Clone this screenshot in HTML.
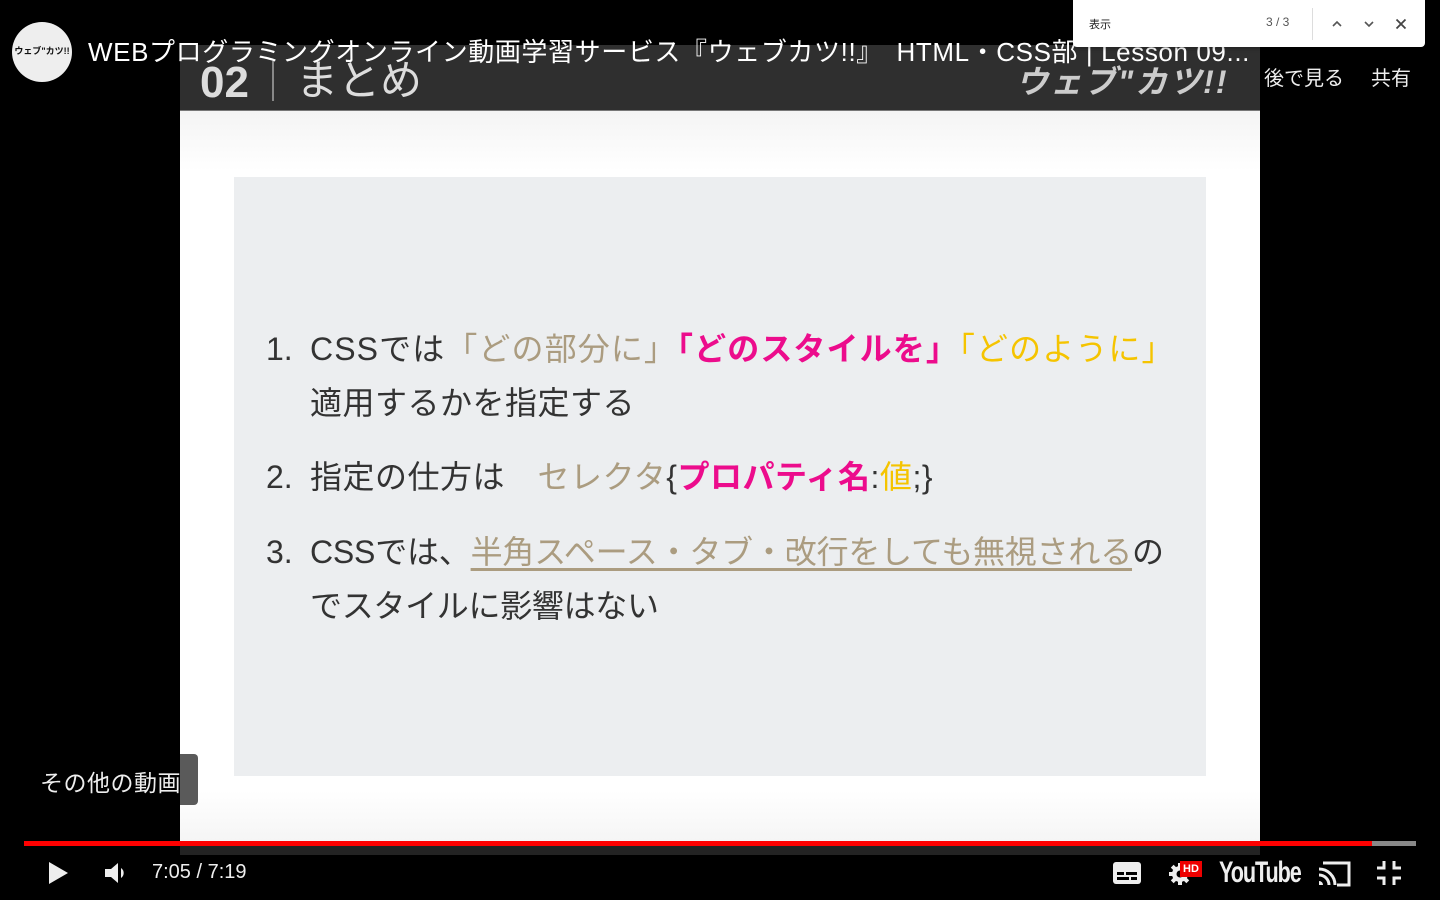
<!DOCTYPE html>
<html><head><meta charset="utf-8"><style>
*{margin:0;padding:0;box-sizing:border-box}
body{width:1440px;height:900px;background:#000;overflow:hidden;position:relative;font-family:"Liberation Sans","Noto Sans CJK JP",sans-serif;color:#fff}
.abs{position:absolute}
.video{left:180px;top:45px;width:1080px;height:810px;background:#fff}
.band{left:0;top:0;width:1080px;height:66px;background:#2f2f2f;border-bottom:1px solid #777}
.slide{left:0;top:66px;width:1080px;height:730px;background:linear-gradient(#f4f4f4,#fff 60px,#fff 680px,#f3f3f3 740px,#b9b9b9 796px)}
.panel{left:54px;top:132px;width:972px;height:599px;background:#eceef0}
.t{font-size:32px;color:#333;white-space:nowrap;letter-spacing:0.5px}
.n{display:inline-block;width:44px;letter-spacing:0}
.tan{color:#ab9c80}.mag{color:#ec0c8c}.yel{color:#f5c400}
</style></head><body>
<div class="abs video">
  <div class="abs band">
    <div class="abs" style="left:20px;top:12px;font-size:44px;font-weight:bold;color:#ddd;line-height:52px">02</div>
    <div class="abs" style="left:92px;top:16px;width:2px;height:40px;background:#888"></div>
    <div class="abs" style="left:116px;top:10px;font-size:42px;color:#ddd;line-height:52px">まとめ</div>
    <div class="abs" style="left:836px;top:12px;font-size:32px;font-weight:bold;color:#ccc;font-style:italic;letter-spacing:2px">ウェブ"カツ!!</div>
  </div>
  <div class="abs slide"></div>
  <div class="abs panel"></div>
  <div class="abs t" style="left:86px;top:279px;letter-spacing:1.1px"><span class="n">1.</span>CSSでは<span class="tan">「どの部分に」</span><span class="mag" style="font-weight:bold">「どのスタイルを」</span><span class="yel">「どのように」</span></div>
  <div class="abs t" style="left:130px;top:333px">適用するかを指定する</div>
  <div class="abs t" style="left:86px;top:407px"><span class="n">2.</span>指定の仕方は　<span class="tan">セレクタ</span>{<span class="mag" style="font-weight:bold">プロパティ名</span>:<span class="yel">値</span>;}</div>
  <div class="abs t" style="left:86px;top:482px;letter-spacing:-0.2px"><span class="n">3.</span>CSSでは、<span class="tan" style="text-decoration:underline;text-decoration-thickness:3px;text-underline-offset:5px">半角スペース・タブ・改行をしても無視される</span>の</div>
  <div class="abs t" style="left:130px;top:536px;letter-spacing:-0.3px">でスタイルに影響はない</div>
  <div class="abs" style="left:0;top:800px;width:1080px;height:10px;background:#232323"></div>
</div>
<div class="abs" style="left:12px;top:22px;width:60px;height:60px;border-radius:50%;background:#eee;color:#111;font-size:9px;font-weight:bold;text-align:center;line-height:58px">ウェブ"カツ!!</div>
<div class="abs" style="left:88px;top:36px;font-size:26px;white-space:nowrap;line-height:32px;letter-spacing:0.6px">WEBプログラミングオンライン動画学習サービス『ウェブカツ!!』　HTML・CSS部 | Lesson 09...</div>
<div class="abs" style="left:1264px;top:62px;font-size:20px;color:#eee">後で見る</div>
<div class="abs" style="left:1371px;top:62px;font-size:20px;color:#eee">共有</div>
<div class="abs" style="left:1073px;top:0;width:352px;height:47px;background:#fff;border-radius:0 0 4px 4px;box-shadow:0 1px 4px rgba(0,0,0,.3);color:#222">
  <div class="abs" style="left:16px;top:16px;font-size:11px">表示</div>
  <div class="abs" style="left:193px;top:15px;font-size:12px;color:#555">3 / 3</div>
  <div class="abs" style="left:239px;top:8px;width:1px;height:32px;background:#ddd"></div>
  <svg class="abs" style="left:256px;top:16px" width="16" height="16" viewBox="0 0 16 16"><path d="M4 10l4-4 4 4" stroke="#555" stroke-width="1.6" fill="none"/></svg>
  <svg class="abs" style="left:288px;top:16px" width="16" height="16" viewBox="0 0 16 16"><path d="M4 6l4 4 4-4" stroke="#555" stroke-width="1.6" fill="none"/></svg>
  <svg class="abs" style="left:320px;top:16px" width="16" height="16" viewBox="0 0 16 16"><path d="M3.5 3.5l9 9M12.5 3.5l-9 9" stroke="#444" stroke-width="1.8"/></svg>
</div>
<div class="abs" style="left:180px;top:754px;width:18px;height:51px;background:#5a5a5a;border-radius:0 4px 4px 0"></div>
<div class="abs" style="left:40px;top:764px;font-size:23px;color:#eee;letter-spacing:0.5px">その他の動画</div>
<div class="abs" style="left:24px;top:841px;width:1392px;height:5px;background:#888"></div>
<div class="abs" style="left:24px;top:841px;width:1348px;height:5px;background:#f00"></div>
<svg class="abs" style="left:46px;top:860px" width="24" height="26" viewBox="0 0 24 26"><path d="M3 2v22l19-11z" fill="#eee"/></svg>
<svg class="abs" style="left:104px;top:860px" width="24" height="26" viewBox="0 0 24 26"><path d="M1 9h6l7-6v20l-7-6H1z" fill="#eee"/><path d="M17 8a6 6 0 0 1 0 10z" fill="#eee"/></svg>
<div class="abs" style="left:152px;top:861px;font-size:20px;color:#eee">7:05 / 7:19</div>
<svg class="abs" style="left:1113px;top:861px" width="28" height="24" viewBox="0 0 28 24"><rect x="0" y="1" width="28" height="22" rx="3" fill="#eee"/><rect x="4" y="11" width="7" height="3" fill="#000"/><rect x="13" y="11" width="11" height="3" fill="#000"/><rect x="4" y="16" width="12" height="3" fill="#000"/><rect x="18" y="16" width="6" height="3" fill="#000"/></svg>
<svg class="abs" style="left:1168px;top:860px" width="26" height="26" viewBox="0 0 26 26"><g fill="#eee"><circle cx="12" cy="14" r="8"/><rect x="10" y="3" width="4" height="22"/><rect x="1" y="12" width="22" height="4"/><rect x="10" y="3" width="4" height="22" transform="rotate(45 12 14)"/><rect x="10" y="3" width="4" height="22" transform="rotate(-45 12 14)"/></g><circle cx="12" cy="14" r="3.5" fill="#000"/></svg>
<div class="abs" style="left:1180px;top:861px;width:22px;height:16px;background:#e00;font-size:11px;font-weight:bold;line-height:16px;text-align:center">HD</div>
<div class="abs" style="left:1219px;top:856px;font-size:30px;font-weight:bold;color:#eee;letter-spacing:-1.5px;transform:scaleX(0.72);transform-origin:left">YouTube</div>
<svg class="abs" style="left:1317px;top:859px" width="36" height="30" viewBox="0 0 36 30"><path d="M6 4h26v22H20" stroke="#eee" stroke-width="3" fill="none"/><path d="M2 10a16 16 0 0 1 16 16M2 16a10 10 0 0 1 10 10" stroke="#eee" stroke-width="3" fill="none"/><path d="M2 22a4 4 0 0 1 4 4H2z" fill="#eee"/></svg>
<svg class="abs" style="left:1376px;top:860px" width="26" height="26" viewBox="0 0 26 26"><path d="M8 1v7H1M18 1v7h7M8 25v-7H1M18 25v-7h7" stroke="#eee" stroke-width="3" fill="none"/></svg>
</body></html>
